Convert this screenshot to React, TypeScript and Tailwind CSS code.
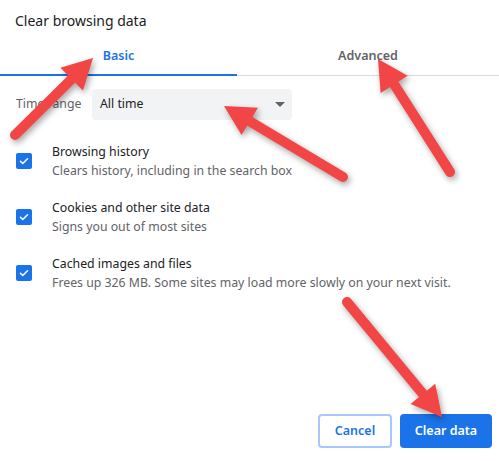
import React from 'react'

type Pt = [number, number]

// red callout arrow: tail -> tip, drawn with a rounded shaft and a triangular head
function Arrow({ from, to }: { from: Pt; to: Pt }) {
  const [x1, y1] = from
  const [x2, y2] = to
  const len = Math.hypot(x2 - x1, y2 - y1)
  const ux = (x2 - x1) / len
  const uy = (y2 - y1) / len
  const head = 30
  const half = 16
  const bx = x2 - ux * head
  const by = y2 - uy * head
  const px = -uy
  const py = ux
  const pts = `${x2},${y2} ${bx + px * half},${by + py * half} ${bx - px * half},${by - py * half}`
  return (
    <g>
      <line x1={x1} y1={y1} x2={bx + ux * 4} y2={by + uy * 4} stroke="#f24545" strokeWidth={10} strokeLinecap="round" />
      <polygon points={pts} fill="#f24545" />
    </g>
  )
}

const items = [
  { title: 'Browsing history', sub: 'Clears history, including in the search box' },
  { title: 'Cookies and other site data', sub: 'Signs you out of most sites' },
  { title: 'Cached images and files', sub: 'Frees up 326 MB. Some sites may load more slowly on your next visit.' },
]

function Check() {
  return (
    <div className="grid h-4 w-4 shrink-0 place-items-center rounded-[2px] bg-[#1a73e8]">
      <svg viewBox="0 0 16 16" className="h-3.5 w-3.5">
        <path d="M4 8.3l2.6 2.5L12 5.4" fill="none" stroke="white" strokeWidth={1.8} strokeLinecap="round" strokeLinejoin="round" />
      </svg>
    </div>
  )
}

export default function App() {
  return (
    <div className="relative h-[461px] w-[499px] overflow-hidden bg-white font-['Noto_Sans',sans-serif]">
      <h1 className="px-[15px] pt-[10px] text-[14px] leading-[22px] text-[#202124]">Clear browsing data</h1>

      <div className="mt-[12px] flex h-[32px] border-b border-[#dadce0]">
        <div className="-mb-px flex w-[237px] items-start justify-center border-b-2 border-[#1a73e8] pt-[3px] text-[12.5px] font-semibold text-[#1a73e8]">
          Basic
        </div>
        <div className="flex flex-1 items-start justify-center pt-[3px] text-[12.5px] font-semibold text-[#5f6368]">
          Advanced
        </div>
      </div>

      <div className="mt-[13px] flex items-center px-4">
        <span className="w-[76px] text-[12.3px] text-[#5f6368]">Time range</span>
        <div className="flex h-[31px] w-[200px] items-center justify-between rounded-[4px] bg-[#f1f3f4] pl-2 pr-[7px] text-[12.3px] text-[#202124]">
          <span>All time</span>
          <svg viewBox="0 0 10 5" className="h-[5px] w-[10px]">
            <path d="M0 0h10L5 5z" fill="#5f6368" />
          </svg>
        </div>
      </div>

      <div className="mt-[22px] flex flex-col gap-[18px] px-4">
        {items.map((it) => (
          <div key={it.title} className="flex items-center gap-5">
            <Check />
            <div className="flex flex-col text-[12.3px] leading-[19px]">
              <span className="text-[#202124]">{it.title}</span>
              <span className="text-[#5f6368]">{it.sub}</span>
            </div>
          </div>
        ))}
      </div>

      <div className="absolute bottom-[13px] right-[7px] flex gap-2">
        <button className="h-[34px] w-[74px] rounded-[4px] border-2 border-[#a8c7fa] bg-white text-[12.5px] font-semibold text-[#1a73e8]">
          Cancel
        </button>
        <button className="h-[34px] w-[92px] rounded-[4px] bg-[#1a73e8] text-[12.5px] font-semibold text-white">
          Clear data
        </button>
      </div>

      <svg className="pointer-events-none absolute inset-0 h-full w-full" viewBox="0 0 499 461" style={{ filter: 'drop-shadow(2px 3px 3px rgba(0,0,0,0.35))' }}>
        <Arrow from={[15, 135]} to={[93, 58]} />
        <Arrow from={[343, 177]} to={[224, 106]} />
        <Arrow from={[450, 172]} to={[378, 59]} />
        <Arrow from={[347, 302]} to={[442, 417]} />
      </svg>
    </div>
  )
}
